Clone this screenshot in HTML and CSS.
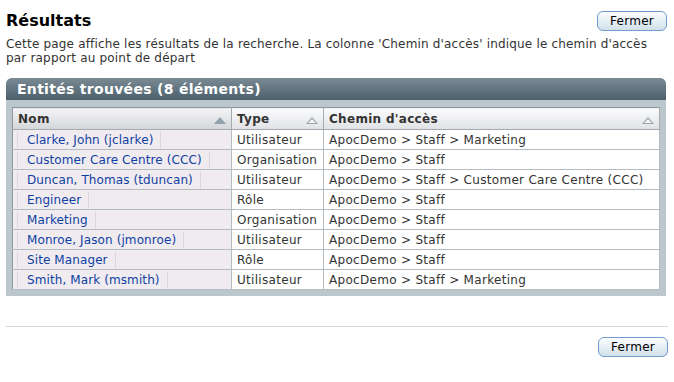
FILE: index.html
```html
<!DOCTYPE html>
<html lang="fr">
<head>
    <meta charset="UTF-8">
    <title>Résultats</title>
    <link rel="stylesheet" href="styles.css">
</head>
<body>
    <div class="page">
        <div class="top">
            <h1>Résultats</h1>
            <button class="btn">Fermer</button>
        </div>
        <p class="intro">Cette page affiche les résultats de la recherche. La colonne 'Chemin d'accès' indique le chemin d'accès par rapport au point de départ</p>

        <div class="panel">
            <div class="panel-title">Entités trouvées (8 éléments)</div>
            <div class="panel-body">
                <table class="results">
                    <thead>
                        <tr>
                            <th class="col-nom">Nom <span class="sort sorted"></span></th>
                            <th class="col-type">Type <span class="sort"></span></th>
                            <th>Chemin d'accès <span class="sort"></span></th>
                        </tr>
                    </thead>
                    <tbody>
                        <tr><td class="name"><span class="link">Clarke, John (jclarke)</span></td><td>Utilisateur</td><td>ApocDemo &gt; Staff &gt; Marketing</td></tr>
                        <tr><td class="name"><span class="link">Customer Care Centre (CCC)</span></td><td>Organisation</td><td>ApocDemo &gt; Staff</td></tr>
                        <tr><td class="name"><span class="link">Duncan, Thomas (tduncan)</span></td><td>Utilisateur</td><td>ApocDemo &gt; Staff &gt; Customer Care Centre (CCC)</td></tr>
                        <tr><td class="name"><span class="link">Engineer</span></td><td>Rôle</td><td>ApocDemo &gt; Staff</td></tr>
                        <tr><td class="name"><span class="link">Marketing</span></td><td>Organisation</td><td>ApocDemo &gt; Staff</td></tr>
                        <tr><td class="name"><span class="link">Monroe, Jason (jmonroe)</span></td><td>Utilisateur</td><td>ApocDemo &gt; Staff</td></tr>
                        <tr><td class="name"><span class="link">Site Manager</span></td><td>Rôle</td><td>ApocDemo &gt; Staff</td></tr>
                        <tr><td class="name"><span class="link">Smith, Mark (msmith)</span></td><td>Utilisateur</td><td>ApocDemo &gt; Staff &gt; Marketing</td></tr>
                    </tbody>
                </table>
            </div>
        </div>

        <div class="footer">
            <button class="btn">Fermer</button>
        </div>
    </div>
</body>
</html>
```

FILE: styles.css
```css
* {
    margin: 0;
    padding: 0;
    box-sizing: border-box;
}

body {
    background: #fff;
    font-family: "DejaVu Sans", Verdana, sans-serif;
    font-size: 12px;
    letter-spacing: 0.3px;
    color: #222;
}

.page {
    padding: 11px 6px 0 6px;
}

.top {
    display: flex;
    justify-content: space-between;
    align-items: flex-start;
}

h1 {
    font-size: 16px;
    font-weight: bold;
    color: #000;
    line-height: 20px;
    letter-spacing: 0;
}

.btn {
    font-family: "DejaVu Sans", Verdana, sans-serif;
    font-size: 12px;
    letter-spacing: 0.3px;
    color: #000;
    width: 70px;
    height: 20px;
    margin-right: 1px;
    border: 1px solid #6f9bd1;
    border-radius: 6px;
    background: linear-gradient(#fdfeff, #e3edf4 55%, #d4e1ea);
    line-height: 17px;
}

.intro {
    margin-top: 6px;
    line-height: 14px;
    letter-spacing: 0.18px;
    color: #333;
    width: 656px;
}

.panel {
    margin-top: 13px;
    background: #bcc6cd;
    border-radius: 6px 6px 0 0;
    width: 660px;
}

.panel-title {
    height: 22px;
    border-radius: 6px 6px 0 0;
    background: linear-gradient(#7b8b95, #5d707b 60%, #4c5f6a);
    color: #fff;
    font-size: 14px;
    font-weight: bold;
    line-height: 22px;
    padding-left: 11px;
}

.panel-body {
    padding: 7px 6px 6px 6px;
}

.results {
    width: 648px;
    border-collapse: collapse;
    background: #fff;
    border: 1px solid #8c979f;
}

.results th {
    height: 22px;
    text-align: left;
    font-weight: bold;
    color: #333;
    padding: 0 5px;
    background: linear-gradient(#fbfbfc, #eeeff1 50%, #dfe1e4);
    border-right: 1px solid #a3abb1;
    border-bottom: 1px solid #a3abb1;
    position: relative;
}

.results th.col-nom {
    width: 219px;
    background: linear-gradient(#f4f4f6, #e4e5e8 50%, #d3d6da);
}

.results th.col-type {
    width: 92px;
}

.sort {
    position: absolute;
    right: 5px;
    top: 9px;
    width: 0;
    height: 0;
    border-left: 6px solid transparent;
    border-right: 6px solid transparent;
    border-bottom: 7px solid #93a3ae;
}

.sort::after {
    content: "";
    position: absolute;
    left: -4px;
    top: 2px;
    border-left: 4px solid transparent;
    border-right: 4px solid transparent;
    border-bottom: 4px solid #f3f4f6;
}

.sort.sorted::after {
    display: none;
}

.results td {
    height: 20px;
    padding: 0 5px;
    border-right: 1px solid #b4bcc2;
    border-bottom: 1px solid #b4bcc2;
    white-space: nowrap;
    color: #333;
}

.results td.name {
    background: #efebef;
    padding-left: 4px;
}

.link {
    color: #0f3fa4;
    letter-spacing: 0.1px;
    border-left: 1px solid #dcd6dc;
    border-right: 1px solid #dcd6dc;
    padding: 1px 7px 1px 9px;
}

.footer {
    margin-top: 30px;
    border-top: 1px solid #d6d5dc;
    display: flex;
    justify-content: flex-end;
    padding-top: 10px;
    width: 662px;
}

.footer .btn {
    margin-right: 0;
}
```
